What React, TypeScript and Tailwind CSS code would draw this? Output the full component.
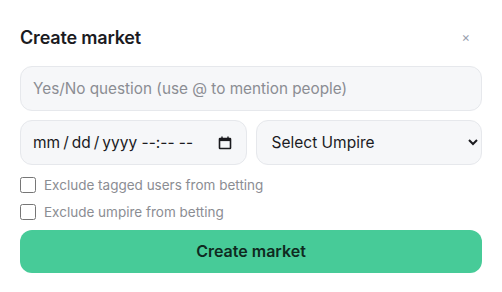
import { useState } from 'react';

export default function App() {
  const [question, setQuestion] = useState('');
  const [umpire, setUmpire] = useState('');

  return (
    <div className="w-[502px] h-[292px] bg-white overflow-hidden" style={{ fontFamily: 'Inter, "Noto Sans", sans-serif' }}>
      <div className="px-5 pt-[25px]">
        <div className="flex items-center justify-between h-6">
          <h2 className="text-[18px] font-semibold text-[#1b1b1f] tracking-[-0.01em]">Create market</h2>
          <button className="mr-[12px] text-[13px] leading-none text-gray-400">×</button>
        </div>

        <div className="mt-[17px] flex flex-col">
          <input
            value={question}
            onChange={e => setQuestion(e.target.value)}
            placeholder="Yes/No question (use @ to mention people)"
            className="h-[45px] w-full rounded-xl border border-[#e6e8ec] bg-[#f6f7f9] px-3 text-[15.3px] text-[#1b1b1f] placeholder:text-[#8b8d93] outline-none"
          />

          <div className="mt-[9px] grid grid-cols-2 gap-[9px]">
            <div className="h-[45px] w-full rounded-xl border border-[#e6e8ec] bg-[#f6f7f9] pl-3 pr-[14px] flex items-center justify-between text-[15.5px] text-[#1b1b1f]">
              <span>
                mm<span className="mx-[3px]">/</span>dd<span className="mx-[3px]">/</span>yyyy --:-- --
              </span>
              <svg width="14" height="14" viewBox="0 0 14 14" fill="none">
                <rect x="1.5" y="2.5" width="11" height="10" rx="0.5" stroke="#1b1b1f" strokeWidth="1.6" />
                <rect x="1.5" y="2.5" width="11" height="2.6" fill="#1b1b1f" />
                <line x1="4" y1="0.5" x2="4" y2="3" stroke="#1b1b1f" strokeWidth="1.4" />
                <line x1="10" y1="0.5" x2="10" y2="3" stroke="#1b1b1f" strokeWidth="1.4" />
              </svg>
            </div>
            <select
              value={umpire}
              onChange={e => setUmpire(e.target.value)}
              className="h-[45px] w-full rounded-xl border border-[#e6e8ec] bg-[#f6f7f9] pl-[11px] pr-2 text-[15.5px] text-[#1b1b1f] outline-none"
            >
              <option value="">Select Umpire</option>
            </select>
          </div>

          <label className="mt-[10px] flex items-center gap-[8px] text-[13.5px] text-[#8b8d93]">
            <input type="checkbox" className="h-[16px] w-[16px] m-0 rounded border-gray-400" />
            Exclude tagged users from betting
          </label>
          <label className="mt-[7px] flex items-center gap-[8px] text-[13.5px] text-[#8b8d93]">
            <input type="checkbox" className="h-[16px] w-[16px] m-0 rounded border-gray-400" />
            Exclude umpire from betting
          </label>

          <button className="mt-[7px] h-[43px] w-full rounded-xl bg-[#47cb98] text-[16px] font-semibold text-[#0f2a1f]">
            Create market
          </button>
        </div>
      </div>
    </div>
  );
}
